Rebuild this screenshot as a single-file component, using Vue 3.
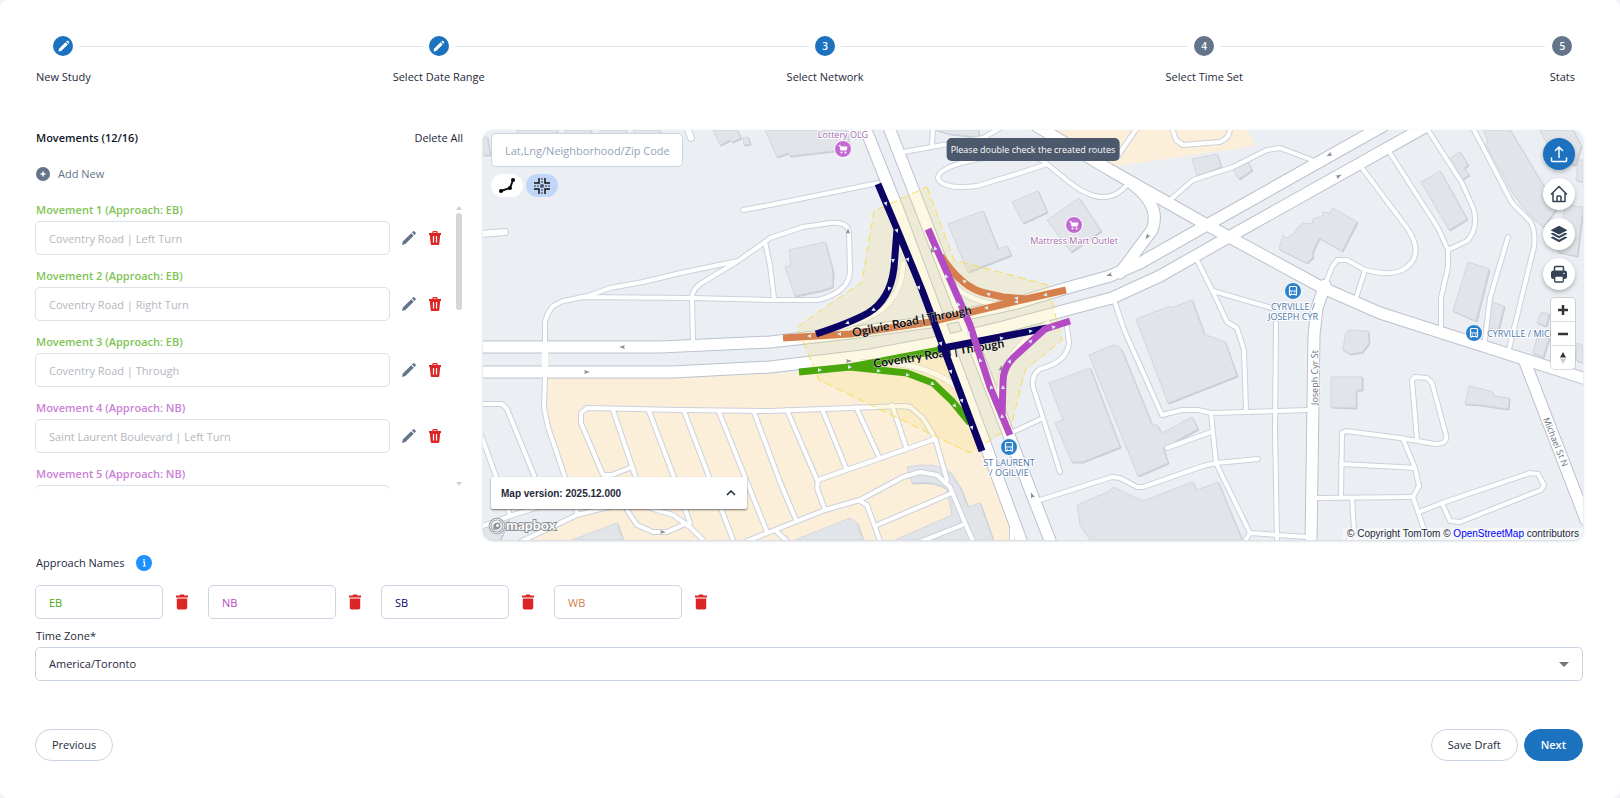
<script setup>
import { ref } from 'vue'

const steps = [
  { label: 'New Study', done: true },
  { label: 'Select Date Range', done: true },
  { label: 'Select Network', num: 3, active: true },
  { label: 'Select Time Set', num: 4 },
  { label: 'Stats', num: 5 }
]

const movements = [
  { id: 1, dir: 'EB', name: 'Coventry Road | Left Turn' },
  { id: 2, dir: 'EB', name: 'Coventry Road | Right Turn' },
  { id: 3, dir: 'EB', name: 'Coventry Road | Through' },
  { id: 4, dir: 'NB', name: 'Saint Laurent Boulevard | Left Turn' },
  { id: 5, dir: 'NB', name: 'Saint Laurent Boulevard | Right Turn' }
]

const approaches = ref(['EB', 'NB', 'SB', 'WB'])
const timeZone = ref('America/Toronto')

const areas = [
  'M547 378 L673 378 L780 373 L820 370 L937 355 L948 350 L1010 520 V540 H520 L577 515 L548 427 L545 407Z',
  'M1053 130 H1248 L1255 146 L1110 167Z'
]

const buildings = [
  'M483 137 L487 137 L490 155 L483 155Z', 'M517 130 H557 V140 H517Z M565 130 H591 V140 H565Z M600 130 H626 V140 H600Z M634 130 H660 V140 H634Z',
  'M713 130 L720 145 L730 140 L732 142 L741 138 L737 130Z', 'M743 138 L748 137 L750 144 L744 145Z',
  'M765 130 L777 157 L788 153 L790 156 L833 151 L850 147 L846 130Z',
  'M789 250 L825 242 L833 272 L832 287 L823 290 L795 296 L785 267 L791 265Z',
  'M948 224 L983 211 L998 249 L1007 246 L1011 255 L968 272Z',
  'M1012 202 L1038 191 L1047 212 L1023 223Z', 'M1047 220 L1079 198 L1101 231 L1071 252Z',
  'M936 130 L978 130 L979 137 L950 134Z',
  'M1192 159 L1217 154 L1221 167 L1197 176Z', 'M1232 168 L1247 161 L1252 170 L1239 179Z',
  'M1283 235 L1286 238 L1295 233 L1297 228 L1303 223 L1312 224 L1313 219 L1322 216 L1323 212 L1330 213 L1333 208 L1357 222 L1342 251 L1319 238 L1312 253 L1313 257 L1307 263 L1279 249Z',
  'M1136 319 L1170 306 L1171 308 L1192 300 L1201 325 L1204 334 L1225 342 L1237 376 L1168 403Z',
  'M1089 355 L1113 345 Q1120 345 1123 353 L1152 425 L1157 425 L1162 433 L1192 417 L1198 429 L1163 448 L1168 463 L1138 476Z',
  'M1049 383 L1090 368 L1120 447 L1082 462 L1072 462 L1055 423 L1063 420Z',
  'M1077 505 L1110 491 L1113 487 L1143 501 L1192 482 L1197 490 L1218 482 L1242 540 H1090 L1080 525Z',
  'M1345 335 L1349 330 L1368 331 L1369 343 L1362 352 L1350 354 L1343 350Z',
  'M1331 377 H1362 V390 H1356 V408 L1331 407Z',
  'M1469 386 L1483 389 L1492 392 L1494 396 L1509 398 L1508 409 L1480 405 L1465 404Z',
  'M1421 182 L1440 171 L1467 219 L1449 230Z', 'M1447 160 L1460 152 L1468 165 L1464 168 L1469 175 L1461 180Z',
  'M1483 130 L1488 141 L1486 145 L1512 192 L1527 212 L1543 227 L1557 208 L1510 130Z',
  'M1540 130 H1573 L1581 146 L1575 165 L1555 160Z', 'M1578 160 H1583 V182 L1576 180Z',
  'M1565 205 L1583 207 L1577 256 L1558 252Z', 'M1468 262 L1489 269 L1476 321 L1453 311Z',
  'M1492 302 L1504 306 L1498 330 L1483 327Z', 'M1541 312 L1549 314 L1546 326 L1537 323Z',
  'M1537 337 L1549 338 L1543 357 L1533 353Z', 'M1577 343 L1583 345 V363 L1576 360Z',
  'M795 540 L850 518 L857 523 L863 540Z', 'M572 540 L617 523 L623 540Z',
  'M907 467 Q935 461 950 472 L960 487 L968 507 L980 503 L993 540 H895 L952 515 L947 490 Q937 480 912 483Z',
  'M483 528 L510 515 L500 540 H485Z'
]

const minor = [
  'M545 343 V322 L548 313 L553 306 L563 301 L588 296 L610 288 L643 282 L685 272 L738 261 L765 242 L770 238 L803 227 L830 223 Q848 221 849 233 L850 270 Q850 292 818 300 H770 L692 298 L580 297',
  'M738 261 L705 281 Q692 288 692 298 L693 342', 'M765 242 L770 265 L774 298', 'M743 210 L770 205 L878 183',
  'M903 152 L983 138 L1000 128', 'M933 128 L932 145',
  'M1047 164 L1020 173 L977 186 Q942 190 938 178 Q938 168 973 160 Q1030 148 1047 164 L1063 177 Q1103 212 1126 186',
  'M1137 128 L1117 157', 'M1172 128 L1176 140 L1183 145 L1220 142 Q1230 138 1230 128',
  'M1170 200 L1193 180 L1233 167 L1267 150 L1280 148 L1312 160',
  'M1362 168 L1407 228 Q1421 248 1412 262 Q1398 280 1363 269 L1347 260 L1337 260 L1332 267 L1325 285', 'M1365 270 L1356 298',
  'M1390 153 L1438 228 L1448 250 V267 L1441 298 V332', 'M1428 130 L1462 183 L1474 210 Q1478 230 1467 241 L1448 250',
  'M1473 128 L1512 203 L1530 221 Q1536 230 1534 247 L1508 353', 'M1508 237 L1490 298 L1484 347',
  'M1198 262 L1213 292 L1227 322 L1237 328 L1244 350 L1246 410', 'M1213 291 L1272 308', 'M1276 323 L1275 430 L1277 540',
  'M1115 303 L1125 332 L1162 415 L1182 410 L1198 410 L1211 413 L1246 412 L1307 410',
  'M1211 413 L1216 463 L1250 533 L1245 541 M1250 533 L1307 537', 'M1167 448 L1211 432',
  'M1258 459 L1216 463 L1203 466 L1143 487 L1137 487 L1120 478 L1112 477 L1040 500',
  'M1067 327 L1069 343 Q1067 362 1040 369 Q1031 375 1033 387 L1043 418 L1060 472', 'M1043 418 L1013 432',
  'M1341 497 L1342 433 L1346 431 L1400 438 L1435 444 Q1448 444 1446 435 L1432 383 L1427 378 L1415 377 L1412 380 L1417 440',
  'M1341 464 L1400 467 L1415 468', 'M1317 498 L1413 497', 'M1403 439 L1415 468 L1419 486 L1413 497 L1428 541',
  'M1419 512 L1442 503 L1530 473 L1538 474 L1544 485 L1541 490 L1460 522 L1450 521 L1442 503', 'M1352 498 L1354 530 L1348 541',
  'M480 404 H502 L507 409 L540 490', 'M480 432 L510 515', 'M545 377 L544 407 L548 427 L577 513',
  'M480 527 L513 515 L545 505', 'M520 542 L577 515 L620 504',
  'M910 407 L903 406 L770 411 L680 410 L587 408 L581 413 V423 L603 475 L612 475 L632 467',
  'M613 410 L640 490', 'M649 411 L675 480 L690 523', 'M684 411 L733 540', 'M719 412 L767 532',
  'M754 412 L780 482 L796 520', 'M627 510 L637 525 L653 532 L667 532 L685 524', 'M650 508 L673 515 L690 527 L705 542',
  'M747 541 L825 510 L860 500 L903 477 L920 472 L937 475 L950 487 L965 523 L973 541',
  'M903 406 L910 407 L923 418 L935 438 L947 480', 'M935 439 L818 480 L817 488 L825 510',
  'M787 410 L817 480', 'M822 409 L846 468', 'M856 407 L879 457', 'M892 405 L906 447',
  'M860 501 L867 505 L880 541', 'M877 525 L952 493', 'M917 543 L965 524', 'M777 532 L787 541', 'M1012 520 V541'
]

const major = [
  'M480 347 H660 L770 342 L850 333 L930 322 L1017 303 L1067 288 L1110 276 L1140 263 L1207 225 L1383 126',
  'M480 372 H673 L770 367 L870 355 L940 342 L1003 327 L1070 309 L1112 298 L1160 276 L1227 238 L1425 127',
  'M864 125 L900 215 L1022 543', 'M888 125 L1051 543',
  'M1035 125 L1110 170 L1207 225 L1323 288 L1380 313 L1480 345 L1586 379',
  'M1130 182 Q1162 205 1152 230 L1120 273',
  'M1325 285 L1317 308 L1314 335 L1311 543', 'M1525 362 L1586 520'
]

const routeArrows = [
  [886, 204, 160], [897, 231, 160], [893, 261, 180], [889, 289, 200], [873, 310, 240], [847, 323, 250],
  [908, 260, 160], [919, 288, 160], [941, 344, 160], [951, 372, 160], [962, 401, 160], [972, 428, 160],
  [1002, 338, 80], [1031, 331, 80], [935, 248, 340], [946, 276, 340], [958, 304, 340], [968, 332, 340],
  [980, 360, 340], [991, 387, 340], [1002, 416, 350], [1003, 387, 0], [1010, 361, 30], [1031, 341, 45], [1054, 327, 75],
  [964, 281, 310], [988, 294, 290], [1016, 298, 280], [1045, 295, 260], [986, 308, 260], [1016, 302, 260],
  [809, 336, 270], [839, 334, 270], [820, 370, 90], [850, 367, 90], [879, 371, 100], [908, 375, 100], [933, 384, 120], [955, 406, 140]
]
const roadArrows = [
  [622, 347, 270], [587, 372, 90], [848, 231, 0], [932, 250, 340], [849, 361, 90], [1001, 368, 10], [1032, 495, 340],
  [1109, 275, 255], [1147, 237, 215], [1329, 155, 240], [1339, 176, 60], [663, 532, 95]
]
</script>

<template>
  <main class="page">
    <ol class="stepper">
      <template v-for="(s, i) in steps" :key="s.label">
        <li v-if="i" class="link" aria-hidden="true"></li>
        <li class="step">
          <div class="rail" :class="{ first: i === 0, last: i === steps.length - 1 }">
            <span class="dot" :class="{ on: s.done || s.active }">
              <svg v-if="s.done" width="13" height="13" viewBox="0 0 13 13"><path d="M1.5 11.5 2 8.800 8.600 2.200 10.800 4.400 4.200 11zM9.200 1.600 10 .8Q10.600.4 11.200 1L12 1.800Q12.500 2.400 12 3L11.400 3.800z" fill="#fff" /></svg>
              <template v-else>{{ s.num }}</template>
            </span>
          </div>
          <span class="caption">{{ s.label }}</span>
        </li>
      </template>
    </ol>

    <section class="network">
      <div class="moves">
        <header class="moves-head">
          <h2>Movements (12/16)</h2>
          <button class="plain">Delete All</button>
        </header>
        <button class="plain add">
          <svg width="14" height="14" viewBox="0 0 14 14"><circle cx="7" cy="7" r="7" fill="#64748b" /><path d="M7 4.500v5M4.500 7h5" stroke="#fff" stroke-width="1.500" /></svg>
          Add New
        </button>
        <div class="scroller">
          <div class="list">
            <div v-for="m in movements" :key="m.id" class="move">
              <label :for="'move' + m.id" :class="m.dir">Movement {{ m.id }} (Approach: {{ m.dir }})</label>
              <div class="move-row">
                <input :id="'move' + m.id" type="text" :value="m.name" disabled />
                <button class="icon" aria-label="Edit movement">
                  <svg width="14" height="14" viewBox="0 0 14 14" fill="#64748b"><path d="M0 14 .8 10.600 9.200 2.200 11.700 4.700 3.300 13.100zM10 1.400 11 .4Q11.800-.3 12.600.5L13.500 1.400Q14.200 2.200 13.500 3L12.500 3.900z" /></svg>
                </button>
                <button class="icon" aria-label="Delete movement">
                  <svg width="12" height="14" viewBox="0 0 12 14"><path d="M4 2V1Q4 .6 4.400.6H7.600Q8 .6 8 1V2" fill="none" stroke="#dc2626" stroke-width="1.200" /><path d="M0 2H12V4H11.200L10.300 13Q10.200 14 9.300 14H2.700Q1.800 14 1.700 13L.8 4H0z" fill="#dc2626" /><path d="M4.500 5v6.500M7.500 5v6.500" stroke="#fff" stroke-width="1.200" /></svg>
                </button>
              </div>
            </div>
          </div>
          <div class="bar" aria-hidden="true"><i class="up"></i><i class="thumb"></i><i class="down"></i></div>
        </div>
      </div>

      <div class="map">
        <svg class="canvas" viewBox="483 130 1100 410" preserveAspectRatio="xMidYMid slice" role="img" aria-label="Map of created routes">
          <path d="M483 130H1583V540H483Z" fill="#ebeff3" />
          <path v-for="a in areas" :key="a" :d="a" fill="#fcefd9" />
          <g v-for="b in buildings" :key="b">
            <path :d="b" class="shade" transform="translate(1 1)" />
            <path :d="b" class="block" />
          </g>
          <g class="case"><path v-for="r in minor" :key="r" :d="r" /></g>
          <path class="case stub" d="M480 234 L505 232M687 127 L691 138" />
          <g class="case wide"><path v-for="r in major" :key="r" :d="r" /></g>
          <g class="road"><path v-for="r in minor" :key="r" :d="r" /></g>
          <path class="road stub" d="M480 234 L505 232M687 127 L691 138M545 345V373" />
          <g class="road wide"><path v-for="r in major" :key="r" :d="r" /></g>
          <g class="ramp-case"><path d="M903 262Q903 290 885 307Q868 322 820 333M950 280Q965 303 1010 306M862 362Q930 360 962 392M1000 400Q995 355 1050 322" /></g>
          <g class="ramp"><path d="M903 262Q903 290 885 307Q868 322 820 333M950 280Q965 303 1010 306M862 362Q930 360 962 392M1000 400Q995 355 1050 322" /></g>
          <path class="zone" d="M927 187 L954 260 L1048 285 L1057 322 L1062 340 L1025 370 L1011 427 L970 453 L819 380 L797 327 L862 282 L874 211Z" />
          <path v-for="a in roadArrows" :key="a.join()" d="M0-3 2 3 0 2-2 3Z" :transform="`translate(${a[0]} ${a[1]}) rotate(${a[2]})`" fill="#8b8f96" />

          <g class="routes">
            <path stroke="#4aa80c" d="M799 372 L850 367 L940 350M850 367 L907 373 L933 383 L952 401 L970 423" />
            <path stroke="#d5804d" d="M783 338 L850 334 L930 322 L1017 301 L1066 290M941 256 Q962 288 985 293 L1003 297 L1027 299" />
          </g>
          <text class="route-name" transform="translate(874 368) rotate(-9)">Coventry Road | Through</text>
          <g class="routes">
            <path stroke="#0b0464" d="M878 184 L897 229 L922 290 L982 451M897 229 L894 268 Q890 300 868 313 Q850 323 816 334M938 349 L1047 328" />
            <path stroke="#b34bc4" d="M928 229 L970 325 L990 387 L1010 435M1002 418 L1003 382 Q1003 368 1013 358 L1045 329 L1070 321" />
          </g>
          <path v-for="a in routeArrows" :key="a.join()" d="M0-2 2 2H-2Z" :transform="`translate(${a[0]} ${a[1]}) rotate(${a[2]})`" fill="#d5ecf5" />
          <text class="route-name" transform="translate(853 337) rotate(-11)">Ogilvie Road | Through</text>

          <g v-for="p in [[843, 149], [1074, 225]]" :key="p[0]" :transform="`translate(${p[0]} ${p[1]})`">
            <circle r="8.500" fill="#c26bd2" stroke="#fff" />
            <path d="M-4.500-3.500H-3L-2 1H3L4-2" fill="none" stroke="#fff" stroke-width="1.200" /><path d="M-2.800-2.500H4L3 1H-2z" fill="#fff" /><circle cx="-1.500" cy="3.500" r="1" fill="#fff" /><circle cx="2.500" cy="3.500" r="1" fill="#fff" />
          </g>
          <text class="shop" x="843" y="138">Lottery OLG</text>
          <text class="shop" x="1074" y="244">Mattress Mart Outlet</text>
          <g v-for="p in [[1293, 291], [1474, 333], [1009, 447]]" :key="p[0]" :transform="`translate(${p[0]} ${p[1]})`">
            <circle r="8.500" fill="#2a80cb" stroke="#fff" />
            <rect x="-3.500" y="-4.500" width="7" height="8" rx="1" fill="none" stroke="#fff" stroke-width="1.200" /><path d="M-3.500 0H3.500M-2 2H-1M1 2H2M-3 5V3M3 5V3" stroke="#fff" />
          </g>
          <text class="stop" x="1293" y="310">CYRVILLE /</text>
          <text class="stop" x="1293" y="320">JOSEPH CYR</text>
          <text class="stop" x="1009" y="466">ST LAURENT</text>
          <text class="stop" x="1009" y="476">/ OGILVIE</text>
          <text class="stop left" x="1487" y="337">CYRVILLE / MICHAEL</text>
          <text class="street" transform="translate(1318 405) rotate(-90)">Joseph Cyr St</text>
          <text class="street" transform="translate(1543 419) rotate(68)">Michael St N</text>
        </svg>

        <div class="search">
          <input type="text" aria-label="Location" placeholder="Lat,Lng/Neighborhood/Zip Code" />
          <div class="modes">
            <button class="mode" aria-label="Draw route">
              <svg width="18" height="17" viewBox="0 0 18 17"><path d="M3 14 12 11 15 3" fill="none" stroke="#111" stroke-width="2" /><circle cx="3" cy="14" r="2" /><circle cx="12" cy="11" r="2" /><circle cx="15" cy="3" r="2" /></svg>
            </button>
            <button class="mode picked" aria-label="Draw intersection">
              <svg width="18" height="18" viewBox="0 0 18 18"><path d="M1 6H6V1M12 1V6H17M17 12H12V17M6 17V12H1" fill="none" stroke="#111" stroke-width="1.500" /><path d="M9 1V3M9 4V6M9 12V14M9 15V17M1 9H3M4 9H6M12 9H14M15 9H17" stroke="#666" stroke-width="1.500" /><circle cx="9" cy="9" r="2" fill="#475569" /></svg>
            </button>
          </div>
        </div>
        <div class="notice" role="status">Please double check the created routes</div>
        <div class="tools">
          <button class="tool primary" aria-label="Upload">
            <svg width="18" height="18" viewBox="0 0 18 18" fill="none" stroke="#fff" stroke-width="1.500" stroke-linecap="round" stroke-linejoin="round"><path d="M9 12.500V2M5.500 5.500 9 2 12.500 5.500M1.500 13V15.500Q1.500 16.500 2.500 16.500H15.500Q16.500 16.500 16.500 15.500V13" /></svg>
          </button>
          <button class="tool" aria-label="Home">
            <svg width="18" height="18" viewBox="0 0 18 18" fill="none" stroke="#334155" stroke-width="1.500" stroke-linejoin="round"><path d="M1 9.500 9 1.500 17 9.500M3 8V16.500H15V8M7 16V12Q7 11 8 11H10Q11 11 11 12V16" /></svg>
          </button>
          <button class="tool" aria-label="Layers">
            <svg width="18" height="18" viewBox="0 0 18 18" fill="#334155"><path d="M9 .8 17.500 5.200 9 9.600.5 5.200z" /><path d="M.5 8.800 3 7.700 9 11 15 7.700 17.500 8.800 9 13.300z" /><path d="M.5 12.600 3 11.500 9 14.700 15 11.500 17.500 12.600 9 17.200z" /></svg>
          </button>
          <button class="tool" aria-label="Print">
            <svg width="18" height="18" viewBox="0 0 18 18"><path d="M4.500 6V2.500Q4.500 1.500 5.500 1.500H12.500Q13.500 1.500 13.500 2.500V6" fill="none" stroke="#334155" stroke-width="1.500" /><rect x="1" y="5.500" width="16" height="8.500" rx="2.500" fill="#334155" /><rect x="4.700" y="11" width="8.600" height="6" rx="1" fill="#fff" stroke="#334155" stroke-width="1.300" /><circle cx="14" cy="8.500" r=".8" fill="#fff" /></svg>
          </button>
          <div class="zoom">
            <button aria-label="Zoom in"><svg width="10" height="10" viewBox="0 0 10 10"><path d="M5 0V10M0 5H10" stroke="#333" stroke-width="2.500" /></svg></button>
            <button aria-label="Zoom out"><svg width="10" height="10" viewBox="0 0 10 10"><path d="M0 5H10" stroke="#333" stroke-width="2.500" /></svg></button>
            <button aria-label="Reset north"><svg width="8" height="14" viewBox="0 0 8 14"><path d="M4 1 7 6.500H1z" fill="#333" /><path d="M4 13 7 7.500H1z" fill="#ccc" /></svg></button>
          </div>
        </div>
        <button class="version">
          Map version: 2025.12.000
          <svg width="10" height="6" viewBox="0 0 10 6"><path d="M1 5 5 1 9 5" fill="none" stroke="#1e293b" stroke-width="1.500" /></svg>
        </button>
        <svg class="brand" width="74" height="20" viewBox="0 0 74 20" role="img" aria-label="mapbox">
          <circle cx="10" cy="10" r="7" fill="none" stroke="#8c8f94" stroke-width="2.500" /><circle cx="10" cy="10" r="7" fill="none" stroke="#fff" /><path d="M6.500 13.500Q6 8 9 6.800Q12 6 13.200 8.500Q14 12 11 13Q9 13.800 6.500 13.500z" fill="#8c8f94" /><circle cx="10.500" cy="9.500" r="1.500" fill="#fff" />
          <text x="19" y="14">mapbox</text>
        </svg>
        <div class="credit">© Copyright TomTom © <a href="#">OpenStreetMap</a> contributors</div>
      </div>
    </section>

    <section class="approach">
      <div class="approach-head">
        <span>Approach Names</span>
        <svg width="16" height="16" viewBox="0 0 16 16"><circle cx="8" cy="8" r="8" fill="#1e90ff" /><path d="M7 7.200H8.500V11M6.800 11H9.800" stroke="#fff" stroke-width="1.200" fill="none" /><circle cx="8" cy="4.800" r=".9" fill="#fff" /></svg>
      </div>
      <div class="names">
        <div v-for="(a, i) in approaches" :key="i" class="name">
          <input v-model="approaches[i]" type="text" :class="'in' + a" :aria-label="'Approach ' + (i + 1)" />
          <button class="icon" :aria-label="'Delete approach ' + (i + 1)">
            <svg width="12" height="16" viewBox="0 0 12 16" fill="#dc2626"><path d="M0 1.500H3.500L4.200.5H7.800L8.500 1.500H12V3.500H0zM.8 4.500H11.200V13.500Q11.200 15.500 9.500 15.500H2.500Q.8 15.500.8 13.500z" /></svg>
          </button>
        </div>
      </div>
      <label class="tz-label" for="tz">Time Zone*</label>
      <div class="select">
        <select id="tz" v-model="timeZone"><option>America/Toronto</option></select>
        <svg width="10" height="5" viewBox="0 0 10 5"><path d="M0 0H10L5 5z" fill="#757575" /></svg>
      </div>
    </section>

    <footer class="actions">
      <button class="pill">Previous</button>
      <div class="right">
        <button class="pill">Save Draft</button>
        <button class="pill next">Next</button>
      </div>
    </footer>
  </main>
</template>

<style>
body { background: #f1f3f6; }
</style>

<style scoped>
.page {
  box-sizing: border-box;
  min-height: 100vh;
  padding: 36px 37px 32px 35px;
  background: #fff;
  border-radius: 8px;
  color: #1e293b;
  font: 500 11px/16px "Open Sans", "Noto Sans", sans-serif;
}
button, input, select { font: inherit; color: inherit; box-sizing: border-box; }
button { cursor: pointer; }
svg { display: block; flex: none; }
.stepper { display: flex; list-style: none; margin: 0; padding: 0 8px 0 1px; }
.step { display: flex; flex-direction: column; }
.link { flex: 1; height: 1px; margin-top: 10px; background: #dde5ee; }
.link:nth-last-child(2) { margin-right: 5px; }
.rail { display: flex; align-items: center; height: 20px; }
.rail::before, .rail::after { content: ""; flex: 1; height: 1px; background: #dde5ee; }
.rail.first::before, .rail.last::after, .rail.last::before { background: none; }
.dot {
  display: flex; align-items: center; justify-content: center;
  width: 20px; height: 20px; margin: 0 6px; border-radius: 50%;
  background: #64748b; color: #fff; font-size: 10px; font-weight: 600;
}
.last .dot { margin: 0; }
.dot.on { background: #1d72bf; }
.caption { margin-top: 13px; text-align: center; white-space: nowrap; }

.network { display: grid; grid-template-columns: 448px 1fr; margin-top: 45px; }
.moves { display: flex; flex-direction: column; height: 359px; }
.moves-head { display: flex; justify-content: space-between; padding: 0 20px 0 1px; }
h2 { margin: 0; font: inherit; font-weight: 600; color: #0f172a; }
.plain { padding: 0; border: 0; background: none; }
.add { display: flex; align-items: center; gap: 8px; margin: 20px 0 21px 1px; color: #64748b; }
.scroller { display: flex; flex: 1; min-height: 0; }
.list { flex: 1; overflow: hidden; }
.move { height: 66px; }
.move label { display: block; height: 18px; padding-left: 1px; font-weight: 600; line-height: 14px; }
.EB { color: #80c455; }
.NB { color: #ca81d6; }
.move-row { display: flex; align-items: center; }
.move-row input {
  flex: 1; min-width: 0; height: 34px; margin-right: 12px; padding: 0 13px;
  border: 1px solid #dbe2ea; border-radius: 5px; background: #fff; color: #b3b7bd; font-weight: 400;
}
.icon { display: flex; padding: 0; border: 0; background: none; }
.move-row .icon { margin-right: 13px; }
.bar { display: flex; flex-direction: column; align-items: center; width: 6px; margin: 0 21px 0 2px; padding: 3px 0; }
.up, .down { border: 3px solid transparent; border-top: 0; border-bottom: 4px solid #d0d0d0; }
.down { border-bottom: 0; border-top: 4px solid #d0d0d0; margin-top: auto; }
.thumb { width: 6px; height: 97px; margin-top: 3px; border-radius: 3px; background: #d6d6d6; }

.map { position: relative; height: 410px; border-radius: 10px; overflow: hidden; box-shadow: 0 1px 3px #cbd0d8; }
.canvas { width: 100%; height: 100%; }
.shade { fill: #c6ccd6; stroke: #c6ccd6; }
.block { fill: #e1e4e9; stroke: #d3d7de; stroke-width: 1px; }
.case { fill: none; stroke: #cbd0dc; stroke-width: 6px; stroke-linecap: round; stroke-linejoin: round; }
.case.wide { stroke-width: 13px; stroke: #bac2d0; }
.case.stub { stroke-width: 8px; }
.road { fill: none; stroke: #fff; stroke-width: 4px; stroke-linecap: round; stroke-linejoin: round; }
.road.wide { stroke-width: 11px; }
.road.stub { stroke-width: 6px; }
.ramp-case { fill: none; stroke: #cbd0dc; stroke-width: 6px; }
.ramp { fill: none; stroke: #fff; stroke-width: 5px; }
.zone { fill: #f8e078; fill-opacity: .22; stroke: #f8dc5c; stroke-width: 1px; stroke-dasharray: 8 4; }
.routes { fill: none; stroke-width: 7px; stroke-linejoin: round; }
.route-name { font: 700 12px Lato, sans-serif; fill: #111; stroke: #fff; stroke-opacity: .5; stroke-width: 1px; paint-order: stroke; }
.shop, .stop, .street { font: 500 9px "Open Sans", sans-serif; text-anchor: middle; stroke: #fff; stroke-width: 2px; paint-order: stroke; }
.shop { fill: #a468ad; }
.stop { fill: #4a74aa; }
.left { text-anchor: start; }
.street { fill: #6b7280; text-anchor: start; }

.search { position: absolute; top: 3px; left: 8px; }
.search input { width: 192px; height: 34px; padding: 0 13px; border: 1px solid #cbd5e1; border-radius: 5px; background: #fff; display: block; }
.search input::placeholder { color: #94a3b8; opacity: 1; }
.modes { display: flex; gap: 3px; margin-top: 7px; }
.mode { display: flex; align-items: center; justify-content: center; width: 32px; height: 23px; padding: 0; border: 0; border-radius: 12px; background: #fff; }
.mode.picked { background: #bfd6f8; }
.notice { position: absolute; top: 8px; left: 50%; transform: translateX(-50%); padding: 4px; border-radius: 5px; background: #4c586b; color: #fff; font-size: 9px; line-height: 15px; white-space: nowrap; }
.tools { position: absolute; top: 8px; right: 8px; display: flex; flex-direction: column; align-items: flex-end; gap: 8px; }
.tool { display: flex; align-items: center; justify-content: center; width: 32px; height: 32px; padding: 0; border: 0; border-radius: 50%; background: #fff; box-shadow: 0 2px 4px #0004; }
.tool.primary { background: #1d72bf; }
.zoom { display: flex; flex-direction: column; border-radius: 4px; background: #fff; box-shadow: 0 0 0 1px #0002; }
.zoom button { display: flex; align-items: center; justify-content: center; width: 24px; height: 23px; padding: 0; border: 0; background: none; }
.zoom button + button { border-top: 1px solid #ddd; height: 24px; }
.version {
  position: absolute; left: 8px; bottom: 31px; display: flex; align-items: center; justify-content: space-between;
  width: 256px; height: 32px; padding: 0 11px 0 10px; border: 0; border-radius: 2px; background: #fff;
  box-shadow: 0 1px 2px #0008; font: 700 10px "Liberation Sans", sans-serif;
}
.brand { position: absolute; left: 4px; bottom: 4px; }
.brand text { font: 700 14px Lato, sans-serif; fill: #fff; stroke: #8c8f94; stroke-width: 2px; paint-order: stroke; }
.credit { position: absolute; right: 0; bottom: 0; padding: 0 4px; background: #ffffff80; font: 400 10px/12px "Liberation Sans", sans-serif; }
.credit a { color: #00f; text-decoration: none; }

.approach { margin-top: 14px; }
.approach-head { display: flex; align-items: center; gap: 11px; padding-left: 1px; height: 18px; }
.names { display: flex; gap: 20px; margin-top: 13px; }
.name { display: flex; align-items: center; gap: 13px; }
.name input { width: 128px; height: 34px; padding: 0 13px; border: 1px solid #cbd5e1; border-radius: 5px; background: #fff; }
.inEB { color: #4aa80c; }
.inNB { color: #b34bc4; }
.inSB { color: #0b0464; }
.inWB { color: #d5804d; }
.tz-label { display: block; margin: 9px 0 3px 1px; }
.select { position: relative; }
.select select { display: block; width: 100%; height: 34px; padding: 0 13px; appearance: none; border: 1px solid #cbd5e1; border-radius: 5px; background: #fff; font-weight: 400; }
.select svg { position: absolute; right: 14px; top: 15px; pointer-events: none; }
.actions { display: flex; justify-content: space-between; margin-top: 48px; }
.right { display: flex; gap: 6px; }
.pill { height: 32px; padding: 0 16px; border: 1px solid #cbd5e1; border-radius: 16px; background: #fff; }
.next { background: #1d72bf; border-color: #1d72bf; color: #fff; font-weight: 600; }
</style>
